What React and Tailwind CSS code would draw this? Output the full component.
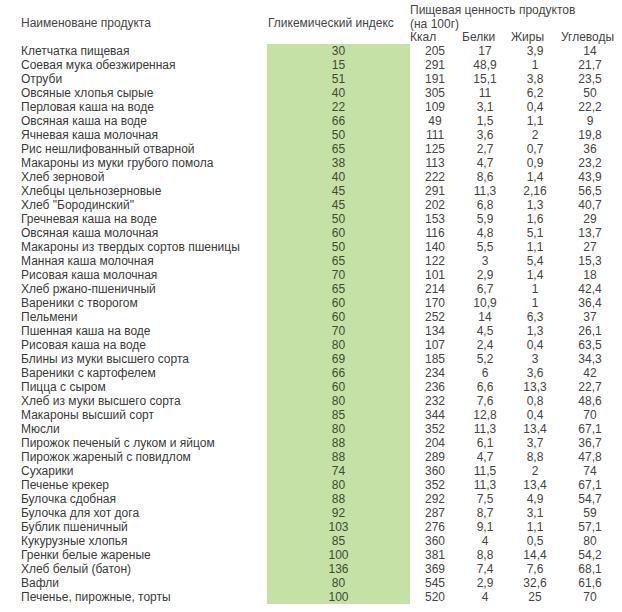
import React from "react";

const rows = [
  ["Клетчатка пищевая", "30", "205", "17", "3,9", "14"],
  ["Соевая мука обезжиренная", "15", "291", "48,9", "1", "21,7"],
  ["Отруби", "51", "191", "15,1", "3,8", "23,5"],
  ["Овсяные хлопья сырые", "40", "305", "11", "6,2", "50"],
  ["Перловая каша на воде", "22", "109", "3,1", "0,4", "22,2"],
  ["Овсяная каша на воде", "66", "49", "1,5", "1,1", "9"],
  ["Ячневая каша молочная", "50", "111", "3,6", "2", "19,8"],
  ["Рис нешлифованный отварной", "65", "125", "2,7", "0,7", "36"],
  ["Макароны из муки грубого помола", "38", "113", "4,7", "0,9", "23,2"],
  ["Хлеб зерновой", "40", "222", "8,6", "1,4", "43,9"],
  ["Хлебцы цельнозерновые", "45", "291", "11,3", "2,16", "56,5"],
  ["Хлеб \"Бородинский\"", "45", "202", "6,8", "1,3", "40,7"],
  ["Гречневая каша на воде", "50", "153", "5,9", "1,6", "29"],
  ["Овсяная каша молочная", "60", "116", "4,8", "5,1", "13,7"],
  ["Макароны из твердых сортов пшеницы", "50", "140", "5,5", "1,1", "27"],
  ["Манная каша молочная", "65", "122", "3", "5,4", "15,3"],
  ["Рисовая каша молочная", "70", "101", "2,9", "1,4", "18"],
  ["Хлеб ржано-пшеничный", "65", "214", "6,7", "1", "42,4"],
  ["Вареники с творогом", "60", "170", "10,9", "1", "36,4"],
  ["Пельмени", "60", "252", "14", "6,3", "37"],
  ["Пшенная каша на воде", "70", "134", "4,5", "1,3", "26,1"],
  ["Рисовая каша на воде", "80", "107", "2,4", "0,4", "63,5"],
  ["Блины из муки высшего сорта", "69", "185", "5,2", "3", "34,3"],
  ["Вареники с картофелем", "66", "234", "6", "3,6", "42"],
  ["Пицца с сыром", "60", "236", "6,6", "13,3", "22,7"],
  ["Хлеб из муки высшего сорта", "80", "232", "7,6", "0,8", "48,6"],
  ["Макароны высший сорт", "85", "344", "12,8", "0,4", "70"],
  ["Мюсли", "80", "352", "11,3", "13,4", "67,1"],
  ["Пирожок печеный с луком и яйцом", "88", "204", "6,1", "3,7", "36,7"],
  ["Пирожок жареный с повидлом", "88", "289", "4,7", "8,8", "47,8"],
  ["Сухарики", "74", "360", "11,5", "2", "74"],
  ["Печенье крекер", "80", "352", "11,3", "13,4", "67,1"],
  ["Булочка сдобная", "88", "292", "7,5", "4,9", "54,7"],
  ["Булочка для хот дога", "92", "287", "8,7", "3,1", "59"],
  ["Бублик пшеничный", "103", "276", "9,1", "1,1", "57,1"],
  ["Кукурузные хлопья", "85", "360", "4", "0,5", "80"],
  ["Гренки белые жареные", "100", "381", "8,8", "14,4", "54,2"],
  ["Хлеб белый (батон)", "136", "369", "7,4", "7,6", "68,1"],
  ["Вафли", "80", "545", "2,9", "32,6", "61,6"],
  ["Печенье, пирожные, торты", "100", "520", "4", "25", "70"],
];

export default function App() {
  return (
    <div
      className="w-[622px] h-[612px] bg-white pt-[2px] pl-[21px] text-[12px] leading-[14px] text-[#3a3a3a]"
      style={{ fontFamily: '"Liberation Sans", Arial, sans-serif' }}
    >
      <div className="grid grid-cols-[246px_143px_50px_50px_50px_60px] grid-rows-[14px_14px_14px] text-[#444]">
        <div className="row-span-3 flex items-center">Наименоване продукта</div>
        <div className="row-span-3 flex items-center pl-[1px]">Гликемический индекс</div>
        <div className="col-span-4 row-span-2 whitespace-nowrap pt-[1px]">
          Пищевая ценность продуктов
          <br />
          (на 100г)
        </div>
        <div>Ккал</div>
        <div className="pl-[2px]">Белки</div>
        <div className="pl-[1px]">Жиры</div>
        <div className="pl-[1px]">Углеводы</div>
      </div>
      <div className="grid grid-cols-[246px_143px_50px_50px_50px_60px] auto-rows-[14px]">
        {rows.map((r, i) => (
          <React.Fragment key={i}>
            <div className="whitespace-nowrap">{r[0]}</div>
            <div className="bg-[#c6e1a6] text-center text-[#3e4a34]">{r[1]}</div>
            <div className="text-center text-[#444]">{r[2]}</div>
            <div className="text-center text-[#444]">{r[3]}</div>
            <div className="text-center text-[#444]">{r[4]}</div>
            <div className="text-center text-[#444]">{r[5]}</div>
          </React.Fragment>
        ))}
      </div>
    </div>
  );
}
